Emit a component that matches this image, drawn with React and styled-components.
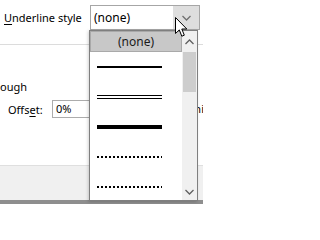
import React from "react"
import styled, { createGlobalStyle } from "styled-components"

const Global = createGlobalStyle`
    html, body {
        margin: 0;
        padding: 0;
        background: #ffffff;
    }
    body {
        font-family: "Segoe UI", "Noto Sans", "Open Sans", sans-serif;
        font-size: 11px;
        color: #000000;
    }
`

const Dialog = styled("div")`
    position: relative;
    width: 203px;
    height: 204px;
    overflow: hidden;
    display: flex;
    flex-direction: column;
    background: #ffffff;
`

const TopRow = styled("div")`
    height: 44px;
    display: grid;
    grid-template-columns: 90px 110px;
    align-items: start;
    border-bottom: 1px solid #dcdcdc;
`

const Label = styled("span")`
    padding-left: ${props => props.indent || 0}px;
    line-height: 16px;
    margin-top: ${props => props.top || 0}px;
    white-space: nowrap;
`

const Key = styled("span")`
    text-decoration: underline;
    text-underline-offset: 2px;
`

const Combo = styled("div")`
    margin-top: 5px;
    height: 25px;
    box-sizing: border-box;
    border: 1px solid #a6a6a6;
    display: flex;
    align-items: stretch;
    background: #ffffff;
`

const ComboText = styled("span")`
    flex: 1;
    padding-left: 3px;
    line-height: 23px;
    font-size: 12px;
`

const ComboButton = styled("div")`
    width: 26px;
    background: #dedede;
    display: flex;
    justify-content: center;
    padding-top: 9px;
    box-sizing: border-box;
`

const Body = styled("div")`
    flex: 1;
    display: flex;
    flex-direction: column;
    padding-top: 34px;
    gap: 5px;
`

const OffsetRow = styled("div")`
    display: grid;
    grid-template-columns: 44px 100px 1fr;
    align-items: center;
    height: 18px;
    padding-left: 8px;
`

const Input = styled("div")`
    height: 18px;
    box-sizing: border-box;
    border: 1px solid #acacac;
    padding-left: 3px;
    line-height: 16px;
`

const Behind = styled("span")`
    justify-self: end;
    margin-right: -1px;
    margin-top: -2px;
`

const Footer = styled("div")`
    height: 35px;
    background: #f0f0f0;
    border-top: 1px solid #dfdfdf;
    box-sizing: border-box;
`

const Band = styled("div")`
    height: 4px;
    background: #8e8e8e;
`

const List = styled("div")`
    position: absolute;
    left: 89px;
    top: 30px;
    width: 109px;
    height: 171px;
    box-sizing: border-box;
    border: 1px solid #7f7f7f;
    background: #ffffff;
    display: flex;
    box-shadow: -1px 1px 3px rgba(0, 0, 0, 0.18);
`

const Items = styled("div")`
    flex: 1;
    display: flex;
    flex-direction: column;
    overflow: hidden;
`

const Selected = styled("div")`
    height: 21px;
    flex-shrink: 0;
    box-sizing: border-box;
    background: #c8c8c8;
    border: 1px solid #a9a9a9;
    text-align: center;
    line-height: 19px;
    font-size: 12px;
    color: #1a1a1a;
`

const LineItem = styled("div")`
    height: 30px;
    flex-shrink: 0;
    display: flex;
    align-items: center;
    padding-left: 7px;
`

const Stroke = styled("div")`
    width: 65px;
    height: ${props => props.size}px;
    background: #000000;
`

const Double = styled("div")`
    width: 65px;
    height: 4px;
    border-top: 1px solid #000000;
    border-bottom: 1px solid #000000;
    box-sizing: border-box;
`

const Dots = styled("div")`
    width: 65px;
    height: 2px;
    background: repeating-linear-gradient(90deg, #000000 0 2px, transparent 2px 4px);
`

const Scrollbar = styled("div")`
    width: 15px;
    background: #f0f0f0;
    display: flex;
    flex-direction: column;
`

const ArrowButton = styled("div")`
    height: ${props => props.h}px;
    display: flex;
    align-items: center;
    justify-content: center;
`

const Thumb = styled("div")`
    height: 40px;
    margin: 0 1px;
    background: #cdcdcd;
`

const Track = styled("div")`
    flex: 1;
`

const Cursor = styled("svg")`
    position: absolute;
    left: 175px;
    top: 17px;
`

const Chevron = ({ up, color = "#606060" }) => (
    <svg width="9" height="6" viewBox="0 0 9 6">
        <polyline
            points={up ? "0.5,5 4.5,1 8.5,5" : "0.5,1 4.5,5 8.5,1"}
            fill="none"
            stroke={color}
            strokeWidth="1.3"
        />
    </svg>
)

const App = () => {
    return (
        <Dialog>
            <Global />
            <TopRow>
                <Label indent={4} top={10}><Key>U</Key>nderline style</Label>
                <Combo>
                    <ComboText>(none)</ComboText>
                    <ComboButton><Chevron color="#707070" /></ComboButton>
                </Combo>
            </TopRow>
            <Body>
                <Label>ough</Label>
                <OffsetRow>
                    <span>Offs<Key>e</Key>t:</span>
                    <Input>0%</Input>
                    <Behind>ni</Behind>
                </OffsetRow>
            </Body>
            <Footer />
            <Band />

            <List>
                <Items>
                    <Selected>(none)</Selected>
                    <LineItem><Stroke size={2} /></LineItem>
                    <LineItem><Double /></LineItem>
                    <LineItem><Stroke size={4} /></LineItem>
                    <LineItem><Dots /></LineItem>
                    <LineItem><Dots /></LineItem>
                </Items>
                <Scrollbar>
                    <ArrowButton h={21}><Chevron up /></ArrowButton>
                    <Thumb />
                    <Track />
                    <ArrowButton h={17}><Chevron /></ArrowButton>
                </Scrollbar>
            </List>

            <Cursor width="13" height="21" viewBox="0 0 13 21">
                <path
                    d="M0.5 0.5 L0.5 16.5 L4.3 12.9 L6.8 19.2 L9.3 18.2 L6.8 12 L11.8 12 Z"
                    fill="#ffffff"
                    stroke="#000000"
                    strokeWidth="1"
                    strokeLinejoin="round"
                />
            </Cursor>
        </Dialog>
    )
}

export default App
